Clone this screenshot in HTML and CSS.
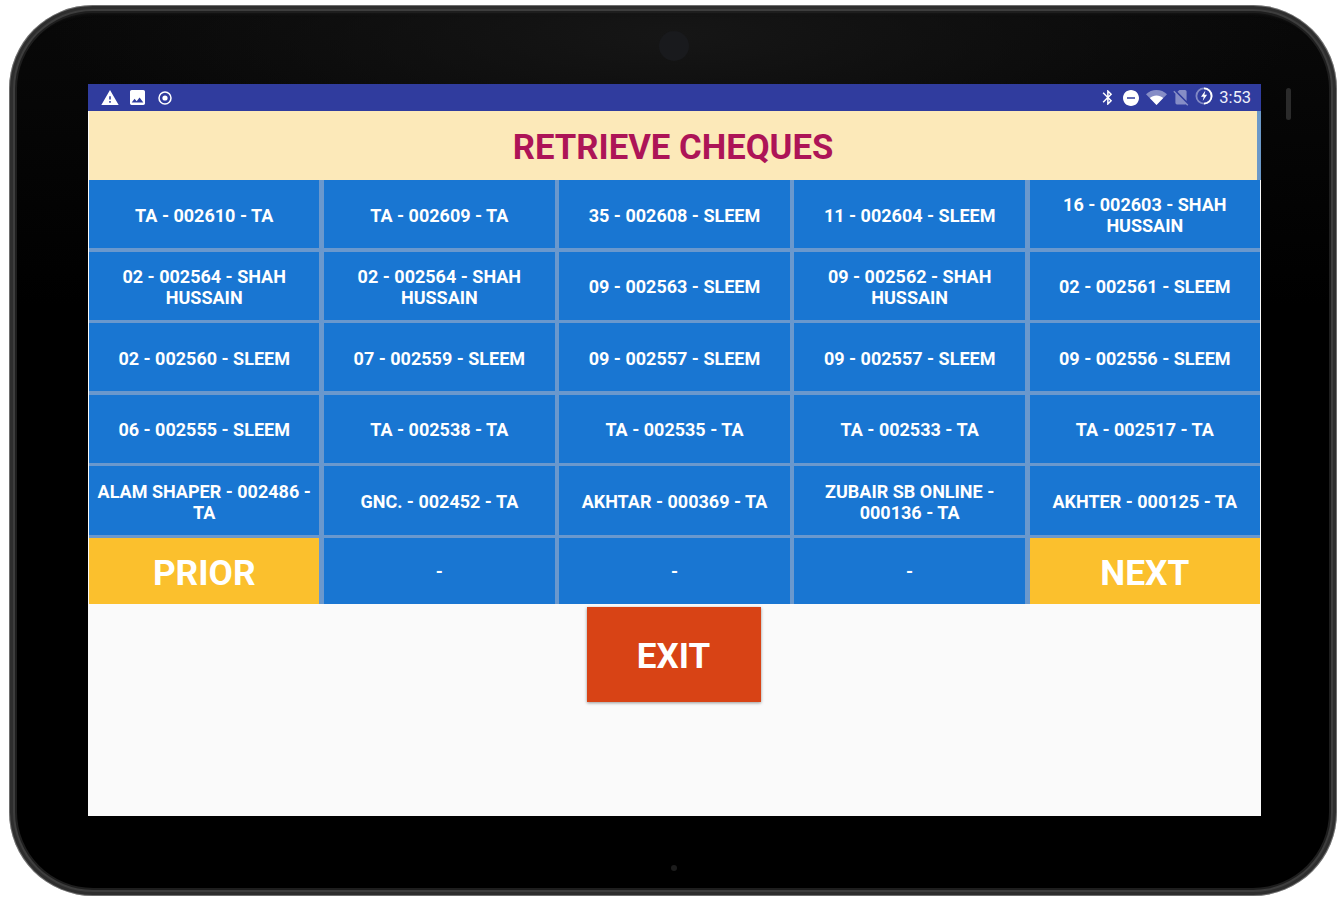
FILE: index.html
```html
<!DOCTYPE html>
<html lang="en">
<head>
<meta charset="utf-8">
<title>Retrieve Cheques</title>
<link rel="stylesheet" href="styles.css">
</head>
<body>
<div class="device">
  <span class="camera"></span>
  <span class="slit"></span>
  <span class="dot"></span>
  <main class="screen">
    <div class="status">
      <div class="status-left">
        <svg class="ic-warn" viewBox="1 2 22 19"><path d="M1 21h22L12 2 1 21zm12-3h-2v-2h2v2zm0-4h-2v-4h2v4z"/></svg>
        <svg class="ic-img" viewBox="3 3 18 18"><path d="M21 19V5c0-1.1-.9-2-2-2H5c-1.1 0-2 .9-2 2v14c0 1.1.9 2 2 2h14c1.1 0 2-.9 2-2zM8.5 13.5l2.5 3.01L14.5 12l4.500 6H5l3.5-4.5z"/></svg>
        <svg class="ic-radio" viewBox="0 0 14 14"><circle class="ring" cx="7" cy="7" r="6"/><circle cx="7" cy="7" r="2.600"/></svg>
      </div>
      <div class="status-right">
        <svg class="ic-bt" viewBox="5 2 13 20"><path d="M17.71 7.71L12 2h-1v7.59L6.41 5 5 6.41 10.59 12 5 17.59 6.41 19 11 14.41V22h1l5.71-5.71-4.3-4.29 4.3-4.29zM13 5.83l1.88 1.88L13 9.59V5.83zm1.88 10.46L13 18.17v-3.76l1.88 1.88z"/></svg>
        <svg class="ic-dnd" viewBox="2 2 20 20"><path d="M12 2C6.48 2 2 6.48 2 12s4.48 10 10 10 10-4.48 10-10S17.52 2 12 2zm5 11H7v-2h10v2z"/></svg>
        <svg class="ic-wifi" viewBox="0 0 21 15"><path class="dim" d="M0 4.2C2.900 1.600 6.500 0 10.500 0S18.100 1.600 21 4.200L10.500 15z"/><path d="M3.800 8.100C5.600 6.500 7.900 5.600 10.500 5.600s4.900.9 6.700 2.500L10.500 15z"/></svg>
        <svg class="ic-sim" viewBox="2 3 20 20"><path class="dim" d="M18.990 5c0-1.100-.89-2-1.990-2h-7L7.660 5.340 19 16.680 18.990 5zM3.650 3.880L2.380 5.150 5 7.770V19c0 1.100.9 2 2 2h10.010c.35 0 .67-.1.96-.26l1.880 1.880 1.270-1.270L3.650 3.880z"/></svg>
        <svg class="ic-batt" viewBox="0 0 18 18"><circle class="ring-dim" cx="9" cy="9" r="7.600"/><path class="ring" d="M9 1.400A7.600 7.600 0 0 1 9 16.600"/><path d="M10.400 3.600L6 9.800h2.700L7.700 14l4.400-6.200H9.400z"/></svg>
        <span class="time">3:53</span>
      </div>
    </div>

    <h1 class="title">RETRIEVE CHEQUES</h1>

    <div class="grid">
      <button class="cell">TA - 002610 - TA</button>
      <button class="cell">TA - 002609 - TA</button>
      <button class="cell">35 - 002608 - SLEEM</button>
      <button class="cell">11 - 002604 - SLEEM</button>
      <button class="cell">16 - 002603 - SHAH HUSSAIN</button>

      <button class="cell">02 - 002564 - SHAH HUSSAIN</button>
      <button class="cell">02 - 002564 - SHAH HUSSAIN</button>
      <button class="cell">09 - 002563 - SLEEM</button>
      <button class="cell">09 - 002562 - SHAH HUSSAIN</button>
      <button class="cell">02 - 002561 - SLEEM</button>

      <button class="cell">02 - 002560 - SLEEM</button>
      <button class="cell">07 - 002559 - SLEEM</button>
      <button class="cell">09 - 002557 - SLEEM</button>
      <button class="cell">09 - 002557 - SLEEM</button>
      <button class="cell">09 - 002556 - SLEEM</button>

      <button class="cell">06 - 002555 - SLEEM</button>
      <button class="cell">TA - 002538 - TA</button>
      <button class="cell">TA - 002535 - TA</button>
      <button class="cell">TA - 002533 - TA</button>
      <button class="cell">TA - 002517 - TA</button>

      <button class="cell">ALAM SHAPER - 002486 - TA</button>
      <button class="cell">GNC. - 002452 - TA</button>
      <button class="cell">AKHTAR - 000369 - TA</button>
      <button class="cell">ZUBAIR SB ONLINE - 000136 - TA</button>
      <button class="cell">AKHTER - 000125 - TA</button>

      <button class="cell nav">PRIOR</button>
      <button class="cell">-</button>
      <button class="cell">-</button>
      <button class="cell">-</button>
      <button class="cell nav">NEXT</button>
    </div>

    <div class="actions">
      <button class="exit">EXIT</button>
    </div>
  </main>
</div>
</body>
</html>
```

FILE: styles.css
```css
* { box-sizing: border-box; }

html, body {
  margin: 0;
  height: 100%;
  background: #fff;
  overflow: hidden;
}

body {
  font-family: Roboto, "Liberation Sans", sans-serif;
  padding: 5px 0 0 9px;
}

.device {
  position: relative;
  width: 1328px;
  height: 891px;
  padding: 79px 76px 80px 79px;
  border-radius: 84px;
  background:
    radial-gradient(ellipse 620px 140px at 50% 30px, #161616 0, rgba(22, 22, 22, 0) 100%),
    linear-gradient(#090909 0, #060606 100px, #000 300px);
  box-shadow:
    inset 0 0 0 1px #6e6e6e,
    inset 0 0 0 4px #2e2e2e,
    inset 0 0 0 6px #3d3d3d,
    inset 0 0 0 8px #1e1e1e,
    inset 0 11px 3px -2px #161616;
}

.camera {
  position: absolute;
  left: 650px;
  top: 26px;
  width: 30px;
  height: 30px;
  border-radius: 50%;
  background: #191a1d;
}

.slit {
  position: absolute;
  left: 1277px;
  top: 83px;
  width: 5px;
  height: 32px;
  border-radius: 3px;
  background: #2b2b2b;
}

.dot {
  position: absolute;
  left: 662px;
  top: 860px;
  width: 6px;
  height: 6px;
  border-radius: 50%;
  background: #1c1c1c;
}

.screen {
  display: flex;
  flex-direction: column;
  height: 732px;
  background: #fafafa;
}

.status {
  flex: none;
  display: flex;
  justify-content: space-between;
  align-items: center;
  height: 27px;
  background: #303c9e;
  color: #fff;
}

.status svg {
  display: block;
  fill: #fff;
}

.status-left {
  display: flex;
  align-items: center;
  padding-left: 13px;
}

.ic-warn { width: 18px; height: 15px; }
.ic-img { width: 15px; height: 15px; margin-left: 11px; }
.ic-radio { width: 14px; height: 14px; margin-left: 13px; }

.status-right {
  display: flex;
  align-items: center;
  padding-right: 10px;
}

.ic-bt { width: 11px; height: 15px; }
.ic-dnd { width: 16px; height: 16px; margin-left: 10px; }
.ic-wifi { width: 21px; height: 15px; margin-left: 7px; }
.ic-sim { width: 16px; height: 16px; margin-left: 6px; }
.ic-batt { width: 18px; height: 18px; margin: -4px 0 0 6px; }

.status .dim { opacity: .42; }

.status .ring-dim,
.status .ring {
  fill: none;
  stroke: #fff;
  stroke-width: 1.800;
}

.ic-radio .ring { stroke-width: 1.500; }

.status .ring-dim { opacity: .4; }

.time {
  margin-left: 6px;
  font-size: 16.500px;
  line-height: 27px;
  color: #eef0fa;
}

.title {
  flex: none;
  margin: 0 4px 0 1px;
  height: 69px;
  background: #fce9b9;
  color: #ad1457;
  font-size: 34.700px;
  font-weight: 700;
  line-height: 72px;
  text-align: center;
  box-shadow: 4px 0 0 #6b99c9;
}

.grid {
  flex: none;
  display: grid;
  grid-template-columns: repeat(5, 1fr);
  grid-template-rows: repeat(5, 68.300px) 66px;
  gap: 3.300px 4.750px;
  height: 424px;
  margin: 0 1px;
  background: #6a98cd;
}

.cell {
  display: flex;
  align-items: center;
  justify-content: center;
  min-width: 0;
  border: 0;
  padding: 2px 8px 0;
  background: #1976d2;
  color: #fff;
  font-family: inherit;
  font-size: 18px;
  font-weight: 700;
  line-height: 21px;
  text-align: center;
}

.nav {
  padding-top: 5px;
  background: #fbc02d;
  font-size: 35.300px;
}

.actions {
  flex: none;
  display: flex;
  justify-content: center;
  padding: 2.500px 2px 0 0;
}

.exit {
  width: 174px;
  height: 95.500px;
  border: 0;
  padding: 4px 0 0;
  background: #d84315;
  color: #fff;
  font-family: inherit;
  font-size: 35px;
  font-weight: 700;
  box-shadow: 0 1px 3px rgba(0, 0, 0, .4);
}
```
